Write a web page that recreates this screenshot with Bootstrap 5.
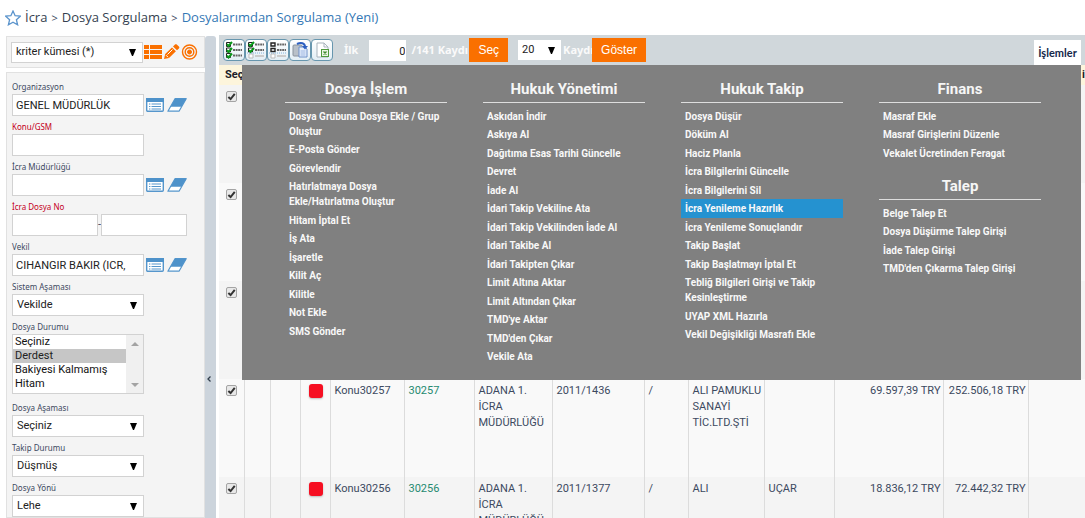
<!DOCTYPE html>
<html lang="tr">
<head>
<meta charset="utf-8">
<meta name="viewport" content="width=device-width, initial-scale=1">
<title>Dosyalarımdan Sorgulama</title>
<link href="https://cdn.jsdelivr.net/npm/bootstrap@5.3.0/dist/css/bootstrap.min.css" rel="stylesheet">
<style>
body{font-family:Roboto,"Noto Sans",sans-serif;font-size:11px;line-height:16px;color:#3c495f;background:#fff}
a{text-decoration:none}
.app{height:100vh}
.topbar{height:35px;padding-left:5px;font:13px/35px "Open Sans","Noto Sans",sans-serif}
.topbar .breadcrumb{--bs-breadcrumb-font-size:13px;--bs-breadcrumb-item-padding-x:4px;--bs-breadcrumb-divider:">";--bs-breadcrumb-divider-color:#3c495f}
.topbar .breadcrumb-item+.breadcrumb-item::before{font-size:11px}
.topbar a{color:#353f50}
.topbar a.current{color:#3478b5}
.side{width:199px;margin-top:1px}
.workspace{padding-left:6px}
.panel{background:#f4f4f4;border:1px solid #e1e1e1}
.crit{height:32px;padding-left:4px}
.filters{padding:3px 5px 0}
.filters label{display:block;font:8px/14px "Noto Sans",sans-serif;padding-top:4px;color:#3c495f}
.filters label.req{color:#c4001c}
.form-control,.form-select{font-size:11px;line-height:16px;height:22px;width:132px;border:1px solid #d2d2d2;border-radius:0;color:#222;background-color:#fff;padding:2px 4px}
.form-control{padding-left:3px}
.form-select{background-image:url("data:image/svg+xml,%3Csvg xmlns='http://www.w3.org/2000/svg' viewBox='0 0 7 7'%3E%3Cpath d='M0 0h7L4 7H3z'/%3E%3C/svg%3E");background-size:7px 7px;background-position:right 6px center}
.crit .form-select{height:21px;padding:1px 4px}
.half{width:86px}
.multi{width:132px;height:60px;border:1px solid #d2d2d2;background:#fff;margin-bottom:3px}
.multi select{border:0;padding:0;width:113px;height:58px;font-size:11px;outline:0;color:#111;overflow:hidden;scrollbar-width:none}
.multi option{height:14px;min-height:14px;line-height:14px;padding:0 2px}
.multi option:checked{background:#c6c6c6 linear-gradient(#c6c6c6,#c6c6c6);color:#222}
.gutter{background:#f0f0f0;padding:7px 0 6px}
.ico{border:0;background:none;padding:0;line-height:0}
.filters .ico{margin-left:2px}
.filters .ico+.ico{margin-left:3px}
.grip{width:11px;background:#ccd4dc;border:0;border-radius:3px 3px 0 0;margin-top:1px;padding:204px 3px 0 0}
.main{margin-left:3px}
.tools{height:30px;background:#d0d7db;padding:0 4px;color:#fafafa;font:700 11px/20px "Noto Sans",sans-serif}
.tools label{padding:0 11px}
.tool{width:22px;height:22px;border:1px solid #6796ae;border-radius:4px;background:linear-gradient(#fff,#e3eef5);padding:1px;line-height:0}
.tools .form-control{width:37px;height:21px;border:0;text-align:right;padding:2px 1px 0 0;font-family:Roboto,sans-serif}
.tools .form-select{width:43px;height:20px;border:0;padding:1px 4px;margin:0 2px 0 10px;font-family:Roboto,sans-serif}
.clip{width:58px;margin-left:5px}
.clip-s{width:29px}
.btn-go{--bs-btn-bg:#fa7000;--bs-btn-color:#fff;--bs-btn-border-color:#fa7000;--bs-btn-hover-bg:#e36500;--bs-btn-hover-color:#fff;--bs-btn-border-radius:0;--bs-btn-padding-x:8px;--bs-btn-padding-y:0;--bs-btn-font-size:12px;--bs-btn-line-height:22px;font-family:"Liberation Sans",sans-serif}
.btn-menu{background:#fff;border:0;color:#14284a;width:47px;height:25px;padding:0;font:700 11px/25px Lato,sans-serif}
.grid{table-layout:fixed;margin:0;color:#3c495f;--bs-table-bg:transparent}
.grid thead th{height:20px;padding:0 0 0 6px;background:#fdf5dc;color:#1c1c28;border:0;font-weight:700;line-height:20px}
.grid td{height:98px;padding:4px 2px 0 4px;border:0;border-right:1px solid #dcdcdc;background:#f9f9f9;color:inherit;box-shadow:none}
.grid td:last-child{border-right:0}
.grid tbody tr:nth-child(odd) td{background:#f4f4f4}
.grid a{color:#268a70}
.grid .form-check-input{display:block;width:11px;height:11px;margin:2px 0 0 3px;border:1px solid #a4a4a4;border-radius:2px;background:#e8e8e8 url("data:image/svg+xml,%3Csvg xmlns='http://www.w3.org/2000/svg' viewBox='0 0 10 10'%3E%3Cpath d='M1.5 5.5L4 7.8 8.6 2' fill='none' stroke='%23333' stroke-width='2.2'/%3E%3C/svg%3E") center/100%}
.flag{width:14px;height:14px;border-radius:3px;background:#f60f22;box-shadow:0 1px 2px #bbb;margin:1px 0 0 4px}
.mega{top:30px;left:23px;right:4px;background:#808080;padding:0 40px 12px 43px;gap:36px;z-index:5}
.mega section{flex:1 1 0;min-width:0}
.mega h2{font-size:15px;font-weight:700;line-height:26px;margin:11px 0 0;text-align:center;color:#f6f6f6;border-bottom:1px solid #dedede}
.mega ul{padding-top:4px;margin:0 0 2px}
.mega li a{display:block;font-size:10px;font-weight:700;line-height:15px;padding:2px 0 1px 4px;color:#f8f8f8}
.mega li:nth-child(even) a{padding-bottom:2px}
.mega a.on,.mega a:hover{background:#2592d0}
</style>
</head>
<body>
<svg class="d-none">
<symbol id="card" viewBox="0 0 18 14"><rect x=".7" y=".7" width="16.6" height="12.6" rx="1" fill="#fff" stroke="#5596cc" stroke-width="1.4"/><path d="M0 0h18v4H0z" fill="#4e92ca"/><path d="M3 6h1.4M3 8.5h1.4M3 11h1.4M5.500 6h9.500M5.500 8.500h9.500M5.500 11h9.500" stroke="#5596cc" stroke-width="1.2"/></symbol>
<symbol id="rub" viewBox="0 0 20 14"><path d="M8 .7h11.2L12 13.2H.9z" fill="#fff" stroke="#5596cc" stroke-width="1.2" stroke-linejoin="round"/><path d="M8 .7h11.2l-4.6 8H3.500z" fill="#4e92ca"/></symbol>
</svg>
<div class="app d-flex flex-column overflow-hidden">
<header class="topbar d-flex align-items-center flex-shrink-0">
<svg width="16" height="16" viewBox="0 0 16 16"><path d="M8 1l2.1 4.7 5.2.5-3.9 3.5 1.2 5.1L8 12.2l-4.6 2.6 1.2-5.1L.7 6.2l5.2-.5z" fill="#fff" stroke="#5b94cc" stroke-width="1.3"/></svg>
<nav><ol class="breadcrumb m-0 ps-1"><li class="breadcrumb-item"><a href="#">İcra</a></li><li class="breadcrumb-item"><a href="#">Dosya Sorgulama</a></li><li class="breadcrumb-item"><a href="#" class="current">Dosyalarımdan Sorgulama (Yeni)</a></li></ol></nav>
</header>
<div class="workspace d-flex flex-grow-1 overflow-hidden">
<aside class="side flex-shrink-0 d-flex flex-column">
<div class="panel crit d-flex align-items-center flex-shrink-0 mb-1">
<select class="form-select" aria-label="Kriter kümesi"><option>kriter kümesi (*)</option></select>
<button class="ico" aria-label="Liste"><svg width="20" height="16" viewBox="0 0 20 16" fill="#fa7000"><path d="M1 1h5v4H1zM7 1h12v4H7zM1 6h5v4H1zM7 6h12v4H7zM1 11h5v4H1zM7 11h12v4H7z"/></svg></button>
<button class="ico" aria-label="Düzenle"><svg width="17" height="16" viewBox="0 0 17 16" fill="#fa7000"><path d="M1 15l1.2-5L9 3.4l3.9 3.8L6 14zM10 2.4L12 .6c.6-.5 1.4-.4 2 .1l1.9 1.9c.6.6.6 1.4 0 2L14 6.3z"/><path d="M3 11.2l2 2M4.5 10.5l5-5" stroke="#fff" fill="none"/></svg></button>
<button class="ico" aria-label="Hedef"><svg width="18" height="16" viewBox="0 0 18 16" fill="none" stroke="#fa7000"><circle cx="9.5" cy="8" r="7" stroke-width="1.4"/><circle cx="9.5" cy="8" r="4.3" stroke-width="1.4"/><circle cx="9.5" cy="8" r="2" fill="#fa7000"/></svg></button>
</div>
<form class="panel filters flex-grow-1 overflow-hidden">
<label for="org">Organizasyon</label>
<div class="d-flex align-items-center"><input id="org" class="form-control" value="GENEL MÜDÜRLÜK"><button type="button" class="ico" aria-label="Seç"><svg width="18" height="14"><use href="#card"/></svg></button><button type="button" class="ico" aria-label="Temizle"><svg width="20" height="14"><use href="#rub"/></svg></button></div>
<label for="konu" class="req">Konu/GSM</label>
<input id="konu" class="form-control">
<label for="mud">İcra Müdürlüğü</label>
<div class="d-flex align-items-center"><input id="mud" class="form-control"><button type="button" class="ico" aria-label="Seç"><svg width="18" height="14"><use href="#card"/></svg></button><button type="button" class="ico" aria-label="Temizle"><svg width="20" height="14"><use href="#rub"/></svg></button></div>
<label for="no" class="req">İcra Dosya No</label>
<div class="d-flex align-items-center"><input id="no" class="form-control half"><span>-</span><input class="form-control half" aria-label="İcra Dosya No bitiş"></div>
<label for="vek">Vekil</label>
<div class="d-flex align-items-center"><input id="vek" class="form-control" value="CIHANGIR BAKIR (ICR,"><button type="button" class="ico" aria-label="Seç"><svg width="18" height="14"><use href="#card"/></svg></button><button type="button" class="ico" aria-label="Temizle"><svg width="20" height="14"><use href="#rub"/></svg></button></div>
<label for="sis">Sistem Aşaması</label>
<select id="sis" class="form-select"><option>Vekilde</option></select>
<label for="dur">Dosya Durumu</label>
<div class="multi d-flex"><select id="dur" multiple size="4"><option>Seçiniz</option><option selected>Derdest</option><option>Bakiyesi Kalmamış</option><option>Hitam</option></select>
<div class="gutter flex-grow-1 d-flex flex-column justify-content-between align-items-center"><svg width="8" height="4"><path d="M0 4l4-4 4 4z" fill="#a3a3a3"/></svg><svg width="8" height="4"><path d="M0 0l4 4 4-4z" fill="#a3a3a3"/></svg></div></div>
<label for="asa">Dosya Aşaması</label>
<select id="asa" class="form-select"><option>Seçiniz</option></select>
<label for="tak">Takip Durumu</label>
<select id="tak" class="form-select"><option>Düşmüş</option></select>
<label for="yon">Dosya Yönü</label>
<select id="yon" class="form-select"><option>Lehe</option></select>
</form>
</aside>
<button class="grip flex-shrink-0 d-flex justify-content-center align-items-center" aria-label="Paneli gizle"><svg width="4" height="6"><path d="M3.5.5L1 3l2.5 2.5" fill="none" stroke="#34404e" stroke-width="1.3"/></svg></button>
<main class="main flex-grow-1 position-relative overflow-hidden">
<div class="tools d-flex align-items-center">
<button class="tool" aria-label="Tümünü seç"><svg width="18" height="18"><path d="M1.5 1.5h4v4h-4zM1.5 7h4v4h-4zM1.5 12.5h4v4h-4z" fill="#fff" stroke="#222"/><path d="M2 3l1.5 2L7 1M2 9l1.5 2L7 7M2 14.5l1.5 2L7 12.5" fill="none" stroke="#0a9a1a" stroke-width="2"/><path d="M8 3.5h9M8 9h9M8 14.5h9" stroke="#666" stroke-width="2" stroke-dasharray="2 .6"/></svg></button>
<button class="tool" aria-label="Sayfayı seç"><svg width="18" height="18"><path d="M1.5 1.5h4v4h-4zM1.5 7h4v4h-4z" fill="#fff" stroke="#222"/><path d="M2 13h4v4H2z" fill="#fff" stroke="#bbb"/><path d="M2 3l1.5 2L7 1M2 9l1.5 2L7 7" fill="none" stroke="#0a9a1a" stroke-width="2"/><path d="M8 3.5h9M8 9h9" stroke="#666" stroke-width="2" stroke-dasharray="2 .6"/><path d="M0 12h18" stroke="#86b4dc" stroke-dasharray="1 1"/><path d="M8 15h9" stroke="#ccc" stroke-width="2"/></svg></button>
<button class="tool" aria-label="Seçimi kaldır"><svg width="18" height="18"><path d="M2 2h4v3H2zM2 7.5h4v3H2z" fill="#fff" stroke="#222" stroke-width="1.4"/><path d="M2 13h4v4H2z" fill="#fff" stroke="#bbb"/><path d="M8 3.5h9M8 9h9" stroke="#666" stroke-width="2" stroke-dasharray="2 .6"/><path d="M0 12h18" stroke="#86b4dc" stroke-dasharray="1 1"/><path d="M8 15h9" stroke="#ccc" stroke-width="2"/></svg></button>
<button class="tool" aria-label="Kopyala"><svg width="18" height="18"><rect x="2" y="4" width="9" height="11" rx="1" fill="#b9c0c8" stroke="#8a929c"/><path d="M8 6h6l2 2v8H8z" fill="#e8f0fc" stroke="#6d8fc8"/><path d="M9.5 10h5M9.5 12h5M9.5 14h5" stroke="#9ab4e0"/><path d="M6 3c4-2 8-1 8 3" fill="none" stroke="#2c5fc0" stroke-width="2"/><path d="M11 5h6l-3 3.5z" fill="#2c5fc0"/></svg></button>
<button class="tool" aria-label="Excel"><svg width="18" height="18"><path d="M4 2h7l4 4v10H4z" fill="#fff" stroke="#a9b4bd"/><path d="M11 2v4h4" fill="none" stroke="#a9b4bd"/><rect x="8.5" y="8.5" width="7" height="7" fill="#eaf6e4" stroke="#4f9a3c"/><path d="M10.5 10.5l3 3M13.5 10.5l-3 3" stroke="#3f8a2c" stroke-width="1.4"/></svg></button>
<label for="first">İlk</label>
<input id="first" class="form-control" value="0">
<span class="clip text-nowrap">/141 Kaydı</span>
<button class="btn btn-go">Seç</button>
<select class="form-select" aria-label="Kayıt sayısı"><option>20</option></select>
<span class="clip-s text-nowrap">Kaydı</span>
<button class="btn btn-go">Göster</button>
<button class="btn-menu ms-auto align-self-end" aria-expanded="true">İşlemler</button>
</div>
<table class="table grid">
<colgroup><col width="25"><col width="26"><col width="30"><col width="30"><col width="74"><col width="70"><col width="78"><col width="92"><col width="44"><col width="76"><col width="70"><col width="109"><col width="85"><col></colgroup>
<thead><tr><th>Seç</th><th colspan="12"></th><th class="text-end">i</th></tr></thead>
<tbody>
<tr><td><input type="checkbox" class="form-check-input" checked aria-label="Kayıt 1"></td><td></td><td></td><td></td><td></td><td></td><td></td><td></td><td></td><td></td><td></td><td></td><td></td><td></td></tr>
<tr><td><input type="checkbox" class="form-check-input" checked aria-label="Kayıt 2"></td><td></td><td></td><td></td><td></td><td></td><td></td><td></td><td></td><td></td><td></td><td></td><td></td><td></td></tr>
<tr><td><input type="checkbox" class="form-check-input" checked aria-label="Kayıt 3"></td><td></td><td></td><td></td><td></td><td></td><td></td><td></td><td></td><td></td><td></td><td></td><td></td><td></td></tr>
<tr><td><input type="checkbox" class="form-check-input" checked aria-label="Konu30257"></td><td></td><td></td><td><div class="flag"></div></td><td>Konu30257</td><td><a href="#">30257</a></td><td>ADANA 1. İCRA MÜDÜRLÜĞÜ</td><td>2011/1436</td><td>/</td><td>ALI PAMUKLU SANAYİ TİC.LTD.ŞTİ</td><td></td><td class="text-end">69.597,39 TRY</td><td class="text-end">252.506,18 TRY</td><td></td></tr>
<tr><td><input type="checkbox" class="form-check-input" checked aria-label="Konu30256"></td><td></td><td></td><td><div class="flag"></div></td><td>Konu30256</td><td><a href="#">30256</a></td><td>ADANA 1. İCRA MÜDÜRLÜĞÜ</td><td>2011/1377</td><td>/</td><td>ALI</td><td>UÇAR</td><td class="text-end">18.836,12 TRY</td><td class="text-end">72.442,32 TRY</td><td></td></tr>
</tbody>
</table>
<div class="mega position-absolute d-flex">
<section><h2>Dosya İşlem</h2><ul class="list-unstyled"><li><a href="#">Dosya Grubuna Dosya Ekle / Grup Oluştur</a></li><li><a href="#">E-Posta Gönder</a></li><li><a href="#">Görevlendir</a></li><li><a href="#">Hatırlatmaya Dosya Ekle/Hatırlatma Oluştur</a></li><li><a href="#">Hitam İptal Et</a></li><li><a href="#">İş Ata</a></li><li><a href="#">İşaretle</a></li><li><a href="#">Kilit Aç</a></li><li><a href="#">Kilitle</a></li><li><a href="#">Not Ekle</a></li><li><a href="#">SMS Gönder</a></li></ul></section>
<section><h2>Hukuk Yönetimi</h2><ul class="list-unstyled"><li><a href="#">Askıdan İndir</a></li><li><a href="#">Askıya Al</a></li><li><a href="#">Dağıtıma Esas Tarihi Güncelle</a></li><li><a href="#">Devret</a></li><li><a href="#">İade Al</a></li><li><a href="#">İdari Takip Vekiline Ata</a></li><li><a href="#">İdari Takip Vekilinden İade Al</a></li><li><a href="#">İdari Takibe Al</a></li><li><a href="#">İdari Takipten Çıkar</a></li><li><a href="#">Limit Altına Aktar</a></li><li><a href="#">Limit Altından Çıkar</a></li><li><a href="#">TMD'ye Aktar</a></li><li><a href="#">TMD'den Çıkar</a></li><li><a href="#">Vekile Ata</a></li></ul></section>
<section><h2>Hukuk Takip</h2><ul class="list-unstyled"><li><a href="#">Dosya Düşür</a></li><li><a href="#">Döküm Al</a></li><li><a href="#">Haciz Planla</a></li><li><a href="#">İcra Bilgilerini Güncelle</a></li><li><a href="#">İcra Bilgilerini Sil</a></li><li><a href="#" class="on">İcra Yenileme Hazırlık</a></li><li><a href="#">İcra Yenileme Sonuçlandır</a></li><li><a href="#">Takip Başlat</a></li><li><a href="#">Takip Başlatmayı İptal Et</a></li><li><a href="#">Tebliğ Bilgileri Girişi ve Takip Kesinleştirme</a></li><li><a href="#">UYAP XML Hazırla</a></li><li><a href="#">Vekil Değişikliği Masrafı Ekle</a></li></ul></section>
<section><h2>Finans</h2><ul class="list-unstyled"><li><a href="#">Masraf Ekle</a></li><li><a href="#">Masraf Girişlerini Düzenle</a></li><li><a href="#">Vekalet Ücretinden Feragat</a></li></ul><h2>Talep</h2><ul class="list-unstyled"><li><a href="#">Belge Talep Et</a></li><li><a href="#">Dosya Düşürme Talep Girişi</a></li><li><a href="#">İade Talep Girişi</a></li><li><a href="#">TMD'den Çıkarma Talep Girişi</a></li></ul></section>
</div>
</main>
</div>
</div>
<script src="https://cdn.jsdelivr.net/npm/bootstrap@5.3.0/dist/js/bootstrap.bundle.min.js"></script>
</body>
</html>
